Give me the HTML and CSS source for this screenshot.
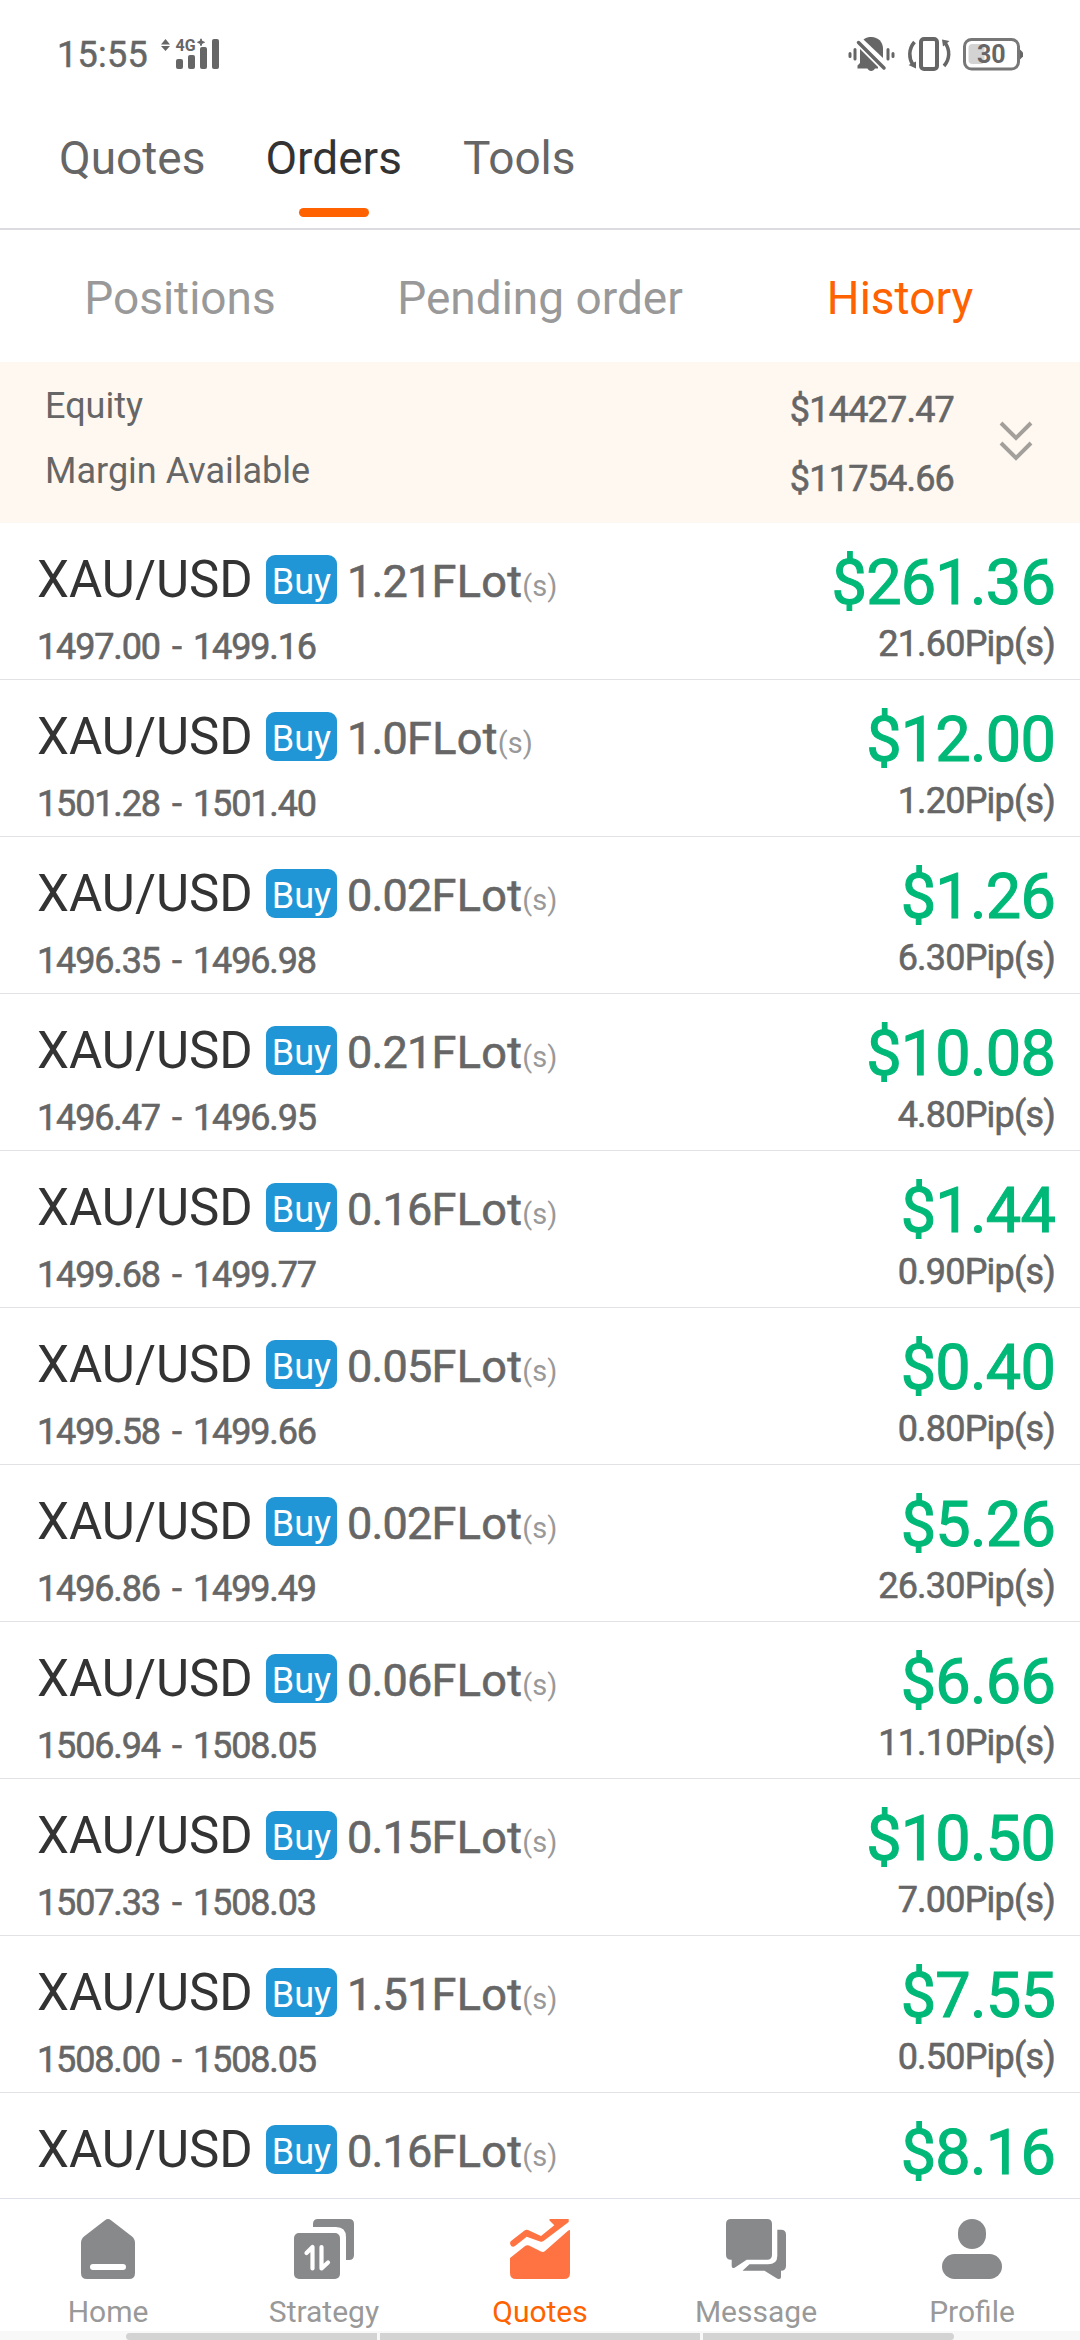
FILE: index.html
```html
<!DOCTYPE html>
<html lang="en">
<head>
<meta charset="utf-8">
<title>Orders</title>
<link rel="stylesheet" href="styles.css">
</head>
<body>
<div class="screen">
  <header class="status">
    <span class="time">15:55</span>
    <svg class="signal" width="60" height="40" viewBox="0 -8 60 40" fill="#666">
      <path d="M5.500 1L10 6.500H1zM1 8H10L5.500 13z"/>
      <text x="15.500" y="12.800" class="net">4G</text>
      <path d="M41 .8l1 2.500 2.500 1-2.500 1-1 2.500-1-2.500-2.500-1 2.500-1z" stroke="#666"/>
      <rect x="16" y="21" width="7" height="10" rx="2"/>
      <rect x="28" y="17" width="7" height="14" rx="2"/>
      <rect x="40" y="9" width="7" height="22" rx="2"/>
      <rect x="52" y="1" width="7" height="30" rx="2"/>
    </svg>
    <svg class="indicators" width="176" height="36" viewBox="0 0 176 36" fill="#666">
      <path d="M12 13L30 31V32.500H27c-1 1.500-2 2.500-3.800 2.500s-2.800-1-3.800-2.500H9.500v-3L12 27z"/>
      <path d="M15.500 3.500C18 1.500 20.500 1 23.500 1 30 1 35 6 35 12.500V22z"/>
      <path d="M10.500 6.500L36 32" stroke="#666" stroke-width="3.500" stroke-linecap="round"/>
      <path d="M2 17.500v3M7 13.500V23M40 13.500V23M45 17.500v3" stroke="#666" stroke-width="3" stroke-linecap="round"/>
      <rect x="73" y="3" width="16" height="30" rx="3" fill="none" stroke="#666" stroke-width="4"/>
      <path d="M66.500 6C60.500 13 60.500 22 65 29M96 30C102 23 102 14 97.500 7.500" fill="none" stroke="#666" stroke-width="3.500"/>
      <path d="M60.500 29l7.500-3.500v7zM94 3.500l7.500 1.500-6.500 5.500z"/>
      <rect x="116.500" y="3.500" width="54" height="29.500" rx="7" fill="none" stroke="#777" stroke-width="3"/>
      <path d="M172 13.500l3 3v4l-3 3z"/>
      <rect x="120.500" y="8" width="16" height="20" rx="4" fill="#d3d3d3"/>
      <text x="129" y="27" class="charge">30</text>
    </svg>
  </header>
  <nav class="tabs">
    <a>Quotes</a><a class="on">Orders</a><a>Tools</a>
  </nav>
  <nav class="subtabs">
    <a>Positions</a><a>Pending order</a><a class="on">History</a>
  </nav>
  <section class="account">
    <div class="labels"><span>Equity</span><span>Margin Available</span></div>
    <div class="values din"><span>$14427.47</span><span>$11754.66</span></div>
    <svg class="expand" width="34" height="42" viewBox="0 0 34 42" fill="none" stroke="#a3a09c" stroke-width="4"><path d="M2 2l15 15L32 2M2 22l15 15 15-15"/></svg>
  </section>
  <main class="orders">
    <article class="order"><div class="top"><span class="pair">XAU/USD</span><span class="side">Buy</span><span class="lot din">1.21<i>FLot</i></span><span class="unit">(s)</span><span class="profit">$261.36</span></div><div class="bottom din"><span class="range">1497.00 - 1499.16</span><span class="pips">21.60Pip(s)</span></div></article>
    <article class="order"><div class="top"><span class="pair">XAU/USD</span><span class="side">Buy</span><span class="lot din">1.0<i>FLot</i></span><span class="unit">(s)</span><span class="profit">$12.00</span></div><div class="bottom din"><span class="range">1501.28 - 1501.40</span><span class="pips">1.20Pip(s)</span></div></article>
    <article class="order"><div class="top"><span class="pair">XAU/USD</span><span class="side">Buy</span><span class="lot din">0.02<i>FLot</i></span><span class="unit">(s)</span><span class="profit">$1.26</span></div><div class="bottom din"><span class="range">1496.35 - 1496.98</span><span class="pips">6.30Pip(s)</span></div></article>
    <article class="order"><div class="top"><span class="pair">XAU/USD</span><span class="side">Buy</span><span class="lot din">0.21<i>FLot</i></span><span class="unit">(s)</span><span class="profit">$10.08</span></div><div class="bottom din"><span class="range">1496.47 - 1496.95</span><span class="pips">4.80Pip(s)</span></div></article>
    <article class="order"><div class="top"><span class="pair">XAU/USD</span><span class="side">Buy</span><span class="lot din">0.16<i>FLot</i></span><span class="unit">(s)</span><span class="profit">$1.44</span></div><div class="bottom din"><span class="range">1499.68 - 1499.77</span><span class="pips">0.90Pip(s)</span></div></article>
    <article class="order"><div class="top"><span class="pair">XAU/USD</span><span class="side">Buy</span><span class="lot din">0.05<i>FLot</i></span><span class="unit">(s)</span><span class="profit">$0.40</span></div><div class="bottom din"><span class="range">1499.58 - 1499.66</span><span class="pips">0.80Pip(s)</span></div></article>
    <article class="order"><div class="top"><span class="pair">XAU/USD</span><span class="side">Buy</span><span class="lot din">0.02<i>FLot</i></span><span class="unit">(s)</span><span class="profit">$5.26</span></div><div class="bottom din"><span class="range">1496.86 - 1499.49</span><span class="pips">26.30Pip(s)</span></div></article>
    <article class="order"><div class="top"><span class="pair">XAU/USD</span><span class="side">Buy</span><span class="lot din">0.06<i>FLot</i></span><span class="unit">(s)</span><span class="profit">$6.66</span></div><div class="bottom din"><span class="range">1506.94 - 1508.05</span><span class="pips">11.10Pip(s)</span></div></article>
    <article class="order"><div class="top"><span class="pair">XAU/USD</span><span class="side">Buy</span><span class="lot din">0.15<i>FLot</i></span><span class="unit">(s)</span><span class="profit">$10.50</span></div><div class="bottom din"><span class="range">1507.33 - 1508.03</span><span class="pips">7.00Pip(s)</span></div></article>
    <article class="order"><div class="top"><span class="pair">XAU/USD</span><span class="side">Buy</span><span class="lot din">1.51<i>FLot</i></span><span class="unit">(s)</span><span class="profit">$7.55</span></div><div class="bottom din"><span class="range">1508.00 - 1508.05</span><span class="pips">0.50Pip(s)</span></div></article>
    <article class="order"><div class="top"><span class="pair">XAU/USD</span><span class="side">Buy</span><span class="lot din">0.16<i>FLot</i></span><span class="unit">(s)</span><span class="profit">$8.16</span></div></article>
  </main>
  <nav class="dock">
    <a><svg width="60" height="60" viewBox="0 0 60 60" fill="#88898b"><path fill-rule="evenodd" d="M27 1.200Q30-1 33 1.200L54 17.500Q57 20 57 24V54Q57 60 51 60H9Q3 60 3 54V24Q3 20 6 17.500ZM15 45a3 3 0 0 0 0 6H45a3 3 0 0 0 0-6Z"/></svg>Home</a>
    <a><svg width="60" height="60" viewBox="0 0 60 60" fill="#88898b"><rect y="14" width="46" height="46" rx="5"/><path d="M19 8V5Q19 0 24 0H55Q60 0 60 5V36Q60 41 55 41H52V18Q52 8 42 8Z"/><path d="M12.500 34L18.500 28V49.500M27.500 28V49.500L34 43.500" fill="none" stroke="#fff" stroke-width="4.200" stroke-linecap="round" stroke-linejoin="round"/></svg>Strategy</a>
    <a class="on"><svg width="60" height="60" viewBox="0 0 60 60" fill="#ff7342"><path d="M1 22L14.500 11.500Q16.300 10.200 18 11L31 17 44.300 6.300 39.500 1.500V0H58.700V3L33.500 22Q31.700 23.300 30 22.500L16.700 17.700 5 27Q3 28.500 1.200 27 -1 24 1 22Z"/><path d="M0 39L14.500 27.500Q16.700 25.500 19 26.500L31 32.500Q33.300 33.500 35 32L58.300 11.500 60 11V54Q60 60 54 60H6Q0 60 0 54Z"/></svg>Quotes</a>
    <a><svg width="60" height="60" viewBox="0 0 60 60" fill="#88898b"><path d="M5 0H41Q46 0 46 5V35.700Q46 40.700 41 40.700H20.700L9 48.500Q5.700 50 5.700 47V40.700H5Q0 40.700 0 35.700V5Q0 0 5 0Z"/><path d="M51.300 10.700H55Q60 10.700 60 15.700V46.700Q60 51.700 55 51.700V58Q55 61 51 59.500L38.500 51.700H16.500L23.500 45.300H42Q51.300 45.300 51.300 37Z"/></svg>Message</a>
    <a><svg width="60" height="60" viewBox="0 0 60 60" fill="#88898b"><rect x="16" width="28" height="30" rx="14"/><rect y="35" width="60" height="25" rx="12.500"/></svg>Profile</a>
  </nav>
  <footer class="gesture"><i></i><i></i><i></i></footer>
</div>
</body>
</html>
```
FILE: styles.css
```css
* { box-sizing: border-box; }
body { margin: 0; background: #fff; font-family: Roboto, sans-serif; color: #666; }
.screen { width: 1080px; height: 2340px; overflow: hidden; display: flex; flex-direction: column; }
.screen > * { flex: none; }
i { font-style: normal; }
.din { -webkit-text-stroke: .6px currentColor; }

.status { height: 108px; display: flex; align-items: flex-start; padding: 36px 56px 0 57px; }
.time { width: 91px; font-size: 36px; line-height: 39px; -webkit-text-stroke: .5px currentColor; letter-spacing: .3px; }
.signal { margin: -6px 0 0 12px; }
.net { font-size: 16px; font-weight: 700; }
.indicators { margin-left: auto; }
.charge { font-size: 25px; font-weight: 700; }

.tabs { height: 122px; display: flex; gap: 60px; padding-left: 59px; border-bottom: 2px solid #dcdce0; }
.tabs a { display: flex; flex-direction: column; align-items: center; font-size: 46px; line-height: 100px; }
.tabs a:last-child { margin-left: 1px; }
.tabs .on { color: #333; }
.tabs .on::after { content: ""; width: 70px; height: 9px; border-radius: 5px; background: #ff6200; }

.subtabs { height: 132px; display: grid; grid-template-columns: repeat(3, 1fr); text-align: center; font-size: 46px; line-height: 137px; color: #999; }
.subtabs .on { color: #ff6200; }

.account { height: 161px; display: flex; background: #fff8f1; font-size: 36px; padding: 12px 47px 0 45px; }
.labels, .values { display: flex; flex-direction: column; }
.labels { line-height: 65px; }
.values { margin-left: auto; padding-top: 2px; line-height: 69px; letter-spacing: -.8px; }
.expand { margin: 47px 0 0 45px; }

.orders { height: 1675px; overflow: hidden; }
.order { height: 157px; border-bottom: 1px solid #e2e2e6; padding: 32px 25px 0 37px; }
.top { display: flex; height: 50px; align-items: flex-start; }
.pair { font-size: 51px; line-height: 50px; color: #333; width: 229px; }
.side { width: 71px; height: 49px; border-radius: 9px; background: #2196d6; color: #fff; font-size: 36px; line-height: 54px; text-align: center; }
.lot { font-size: 45px; line-height: 50px; margin: 2px 0 0 10px; letter-spacing: -.8px; }
.lot i { letter-spacing: .3px; }
.unit { font-size: 29px; line-height: 50px; margin-top: 6px; color: #999; }
.profit { margin: 3px 0 0 auto; font-size: 63px; line-height: 50px; color: #00b877; letter-spacing: -.8px; -webkit-text-stroke: 1.1px currentColor; }
.bottom { display: flex; justify-content: space-between; font-size: 36px; line-height: 42px; padding-top: 21px; }
.range { letter-spacing: -1.15px; word-spacing: 4.4px; }
.pips { margin-top: -3px; letter-spacing: -.8px; }

.dock { height: 133px; border-top: 1px solid #e0e0e8; display: grid; grid-template-columns: repeat(5, 1fr); }
.dock a { display: flex; flex-direction: column; align-items: center; padding-top: 20px; font-size: 30px; line-height: 36px; gap: 15px; color: #999; }
.dock .on { color: #ff6200; }

.gesture { height: 9px; background: #f8f8f8; padding: 2px 126px 0; display: flex; gap: 3px; }
.gesture i { height: 7px; background: #d3d3d3; flex: 251; }
.gesture i:nth-child(2) { flex: 320; }
.gesture i:first-child { border-radius: 4px 0 0 4px; }
.gesture i:last-child { border-radius: 0 4px 4px 0; }
```
